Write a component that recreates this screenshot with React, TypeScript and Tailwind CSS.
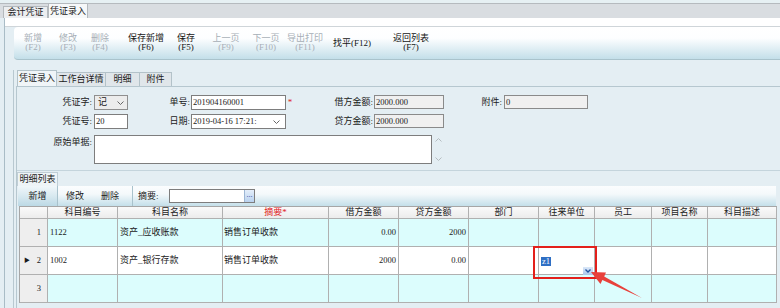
import React from "react";

const cols =
  "grid grid-cols-[28px_70px_105px_106px_70px_70px_70px_56px_57px_56px_69px]";

function Chevron({ cls }: { cls: string }) {
  return (
    <svg className={cls} width="7" height="4" viewBox="0 0 7 4">
      <path d="M0.5 0.5 L3.5 3.5 L6.5 0.5" fill="none" stroke="#666" strokeWidth="1" />
    </svg>
  );
}

const tb = [
  { a: "新增", b: "(F2)", d: true, c: "w-[32px] ml-[3px]" },
  { a: "修改", b: "(F3)", d: true, c: "w-[32px] ml-[3px]" },
  { a: "删除", b: "(F4)", d: true, c: "w-[32px]" },
  { a: "保存新增", b: "(F6)", d: false, c: "w-[40px] ml-[10px]" },
  { a: "保存", b: "(F5)", d: false, c: "w-[32px] ml-[4px]" },
  { a: "上一页", b: "(F9)", d: true, c: "w-[32px] ml-[8px]" },
  { a: "下一页", b: "(F10)", d: true, c: "w-[32px] ml-[8px]" },
  { a: "导出打印", b: "(F11)", d: true, c: "w-[40px] ml-[3px]" },
  { a: "找平(F12)", b: "", d: false, c: "w-[44px] ml-[5px]" },
  { a: "返回列表", b: "(F7)", d: false, c: "w-[40px] ml-[17px]" },
];

const headers = ["", "科目编号", "科目名称", "摘要*", "借方金额", "贷方金额", "部门", "往来单位", "员工", "项目名称", "科目描述"];

const rows = [
  { n: "1", code: "1122", name: "资产_应收账款", memo: "销售订单收款", dr: "0.00", cr: "2000", bg: "bg-[#dcfdfd]", cur: false },
  { n: "2", code: "1002", name: "资产_银行存款", memo: "销售订单收款", dr: "2000", cr: "0.00", bg: "bg-white", cur: true },
  { n: "3", code: "", name: "", memo: "", dr: "", cr: "", bg: "bg-[#dcfdfd]", cur: false },
];

export default function App() {
  return (
    <div className="relative w-[780px] h-[308px] overflow-hidden bg-[#e4eef3] text-[9px] leading-[9px] text-[#1a1a1a] font-['Liberation_Serif','Noto_Sans_CJK_SC',serif]">
      {/* top tab strip */}
      <div className="h-[18px] flex items-end pl-[3px] bg-[linear-gradient(to_bottom,#e6f0f3_0,#e6f0f3_3px,#b5babe_3px,#b5babe_4px,#d9dde1_4px)]">
        <div className="w-[45px] h-[12px] border border-b-0 border-[#b4b9bd] bg-[#eceef0] flex items-center justify-center">
          会计凭证
        </div>
        <div className="w-[40px] h-[15px] border border-b-0 border-[#b4b9bd] bg-[#f6f8f9] flex items-center justify-center">
          凭证录入
        </div>
      </div>

      <div className="ml-[4px] h-[290px] border-l border-[#a9bcc6] flex flex-col">
        <div className="h-[9px] bg-white border-b border-[#cfd5d9]"></div>
        {/* main toolbar */}
        <div className="ml-[9px] h-[33px] rounded-l-[4px] border-b border-[#a9c3cc] bg-[linear-gradient(to_bottom,#ffffff_0%,#fdfeff_35%,#c3dfe9_100%)] flex items-center">
          {tb.map((t, i) => (
            <div
              key={i}
              className={`${t.c} flex flex-col items-center whitespace-nowrap ${t.d ? "text-[#a6aeb6]" : "text-[#151515]"}`}
            >
              <div>{t.a}</div>
              {t.b && <div className="mt-[0px]">{t.b}</div>}
            </div>
          ))}
        </div>
        <div className="h-[10px]"></div>

        {/* inner frame */}
        <div className="ml-[8px] flex-1 border-l border-[#b8c8d0] pl-[2px] flex flex-col">
          {/* second tab row */}
          <div className="h-[16px] pl-[1px] flex items-end">
            <div className="w-[40px] h-[16px] border border-b-0 border-[#b3c2c9] bg-[#f0f5f8] flex items-center justify-center">
              凭证录入
            </div>
            <div className="w-[49px] h-[14px] border border-b-0 border-l-0 border-[#b3c2c9] bg-[#e0e6ea] flex items-center justify-center">
              工作台详情
            </div>
            <div className="w-[34px] h-[14px] border border-b-0 border-l-0 border-[#b3c2c9] bg-[#e0e6ea] flex items-center justify-center">
              明细
            </div>
            <div className="w-[32px] h-[14px] border border-b-0 border-l-0 border-[#b3c2c9] bg-[#e0e6ea] flex items-center justify-center">
              附件
            </div>
          </div>

          <div className="flex-1 border-l border-t border-[#b6c7cf] flex flex-col">
            {/* form panel */}
            <div className="h-[83px] pt-[8px]">
              {/* row 1 */}
              <div className="h-[15px] flex items-start">
                <div className="w-[75px] text-right leading-[15px]">凭证字:</div>
                <div className="ml-[2px] w-[34px] h-[15px] border border-[#8f8f8f] bg-[#ececec] flex items-center justify-between pl-[3px] pr-[3px]">
                  <span>记</span>
                  <Chevron cls="" />
                </div>
                <div className="w-[62px] text-right leading-[15px]">单号:</div>
                <div className="ml-[1px] w-[95px] h-[15px] border border-[#7d7d7d] bg-white pl-[1px] pt-[2px] text-[8.5px]">
                  201904160001
                </div>
                <div className="w-[8px] text-center text-[#e0201c] leading-[15px]">*</div>
                <div className="w-[79px] text-right leading-[15px]">借方金额:</div>
                <div className="ml-[1px] w-[70px] h-[14px] border border-[#8a8a8a] bg-[#f0f0f0] pl-[1px] pt-[2px] text-[8.5px]">
                  2000.000
                </div>
                <div className="w-[58px] text-right leading-[15px]">附件:</div>
                <div className="ml-[2px] w-[84px] h-[14px] border border-[#8a8a8a] bg-[#f0f0f0] pl-[1px] pt-[2px] text-[8.5px]">
                  0
                </div>
              </div>
              {/* row 2 */}
              <div className="mt-[4px] h-[15px] flex items-start">
                <div className="w-[75px] text-right leading-[15px]">凭证号:</div>
                <div className="ml-[2px] w-[34px] h-[15px] border border-[#7d7d7d] bg-white pl-[1px] pt-[2px] text-[8.5px]">
                  20
                </div>
                <div className="w-[62px] text-right leading-[15px]">日期:</div>
                <div className="ml-[1px] w-[95px] h-[15px] border border-[#7d7d7d] bg-white pl-[1px] flex items-center justify-between pr-[5px] text-[8.5px]">
                  <span>2019-04-16 17:21:</span>
                  <Chevron cls="" />
                </div>
                <div className="w-[8px]"></div>
                <div className="w-[79px] text-right leading-[15px]">贷方金额:</div>
                <div className="ml-[1px] w-[70px] h-[14px] border border-[#8a8a8a] bg-[#f0f0f0] pl-[1px] pt-[2px] text-[8.5px]">
                  2000.000
                </div>
              </div>
              {/* row 3 */}
              <div className="mt-[6px] h-[29px] flex items-start">
                <div className="w-[75px] text-right pt-[3px]">原始单据:</div>
                <div className="ml-[2px] w-[338px] h-[29px] border border-[#7d7d7d] bg-white"></div>
                <div className="w-[12px] h-[29px] flex flex-col items-center justify-between py-[3px]">
                  <svg width="7" height="4" viewBox="0 0 7 4">
                    <path d="M0.5 3.5 L3.5 0.5 L6.5 3.5" fill="none" stroke="#b5bcc0" strokeWidth="1" />
                  </svg>
                  <svg width="7" height="4" viewBox="0 0 7 4">
                    <path d="M0.5 0.5 L3.5 3.5 L6.5 0.5" fill="none" stroke="#b5bcc0" strokeWidth="1" />
                  </svg>
                </div>
              </div>
            </div>

            {/* details */}
            <div className="flex-1 border-t border-[#c4d4dc] flex flex-col">
              <div className="h-[15px] pt-[1px] flex">
                <div className="w-[41px] h-[14px] border border-b-0 border-[#c0ced5] bg-[#eef4f7] flex items-center justify-center">
                  明细列表
                </div>
              </div>
              {/* details toolbar */}
              <div className="ml-[1px] w-[758px] h-[20px] bg-[linear-gradient(to_bottom,#fbfdfe_0%,#f4f9fb_40%,#c4dfe9_100%)] flex items-center">
                <div className="w-[40px] h-[20px] border-r border-[#a9c2cc] flex items-center justify-center bg-[linear-gradient(to_bottom,#f1f7fa_0%,#d8e9f0_50%,#bcd9e5_100%)]">
                  新增
                </div>
                <div className="w-[34px] text-center">修改</div>
                <div className="w-[36px] text-center">删除</div>
                <div className="w-[5px] h-[20px] border-r border-[#a9c2cc]"></div>
                <div className="ml-[5px] w-[31px]">摘要:</div>
                <div className="w-[86px] h-[14px] border border-[#7d7d7d] bg-white flex justify-end">
                  <div className="w-[10px] h-[12px] bg-[linear-gradient(to_bottom,#e4eefa,#b9d2ef)] border-l border-[#9db6d4] text-[#1f3f8f] text-[8px] leading-[10px] text-center">
                    ...
                  </div>
                </div>
              </div>
              {/* grid */}
              <div className="ml-[2px] w-[758px] border-l border-t border-[#a6a6a6]">
                <div className={`${cols} h-[12px]`}>
                  {headers.map((h, i) => (
                    <div
                      key={i}
                      className={`border-r border-b border-[#b0b0b0] bg-[linear-gradient(to_bottom,#fafafa,#ececec)] flex items-center justify-center ${
                        i === 3 ? "text-[#e0201c]" : "text-[#222]"
                      }`}
                    >
                      {h}
                    </div>
                  ))}
                </div>
                {rows.map((r, i) => (
                  <div key={i} className={`${cols} h-[28px]`}>
                    <div className="border-r border-b border-[#b0b0b0] bg-[#eeeeee] flex items-center justify-between pl-[4px] pr-[6px] text-[8.5px]">
                      <span className="text-[6px]">{r.cur ? "▶" : ""}</span>
                      <span>{r.n}</span>
                    </div>
                    <div className={`${r.bg} border-r border-b border-[#b0b0b0] flex items-center pl-[2px] text-[8.5px]`}>{r.code}</div>
                    <div className={`${r.bg} border-r border-b border-[#b0b0b0] flex items-center pl-[2px]`}>{r.name}</div>
                    <div className={`${r.bg} border-r border-b border-[#b0b0b0] flex items-center pl-[1px]`}>{r.memo}</div>
                    <div className={`${r.bg} border-r border-b border-[#b0b0b0] flex items-center justify-end pr-[2px] text-[8.5px]`}>{r.dr}</div>
                    <div className={`${r.bg} border-r border-b border-[#b0b0b0] flex items-center justify-end pr-[2px] text-[8.5px]`}>{r.cr}</div>
                    <div className={`${r.bg} border-r border-b border-[#b0b0b0]`}></div>
                    <div className={`${r.bg} border-r border-b border-[#b0b0b0] flex items-center pl-[2px]`}>
                      {r.cur && (
                        <span className="bg-[#2f6fc4] text-white text-[8.5px] leading-[9px] px-[1px] mt-[2px]">z1</span>
                      )}
                    </div>
                    <div className={`${r.bg} border-r border-b border-[#b0b0b0]`}></div>
                    <div className={`${r.bg} border-r border-b border-[#b0b0b0]`}></div>
                    <div className={`${r.bg} border-r border-b border-[#b0b0b0]`}></div>
                  </div>
                ))}
              </div>
            </div>
          </div>
        </div>
      </div>

      {/* overlay: combo drop button */}
      <div className="absolute left-[583px] top-[267px] w-[10px] h-[8px] bg-[linear-gradient(to_bottom,#dbe8f8,#aac6ea)] flex items-center justify-center">
        <svg width="6" height="4" viewBox="0 0 6 4">
          <path d="M0.5 0.5 L3 3 L5.5 0.5" fill="none" stroke="#1f4f9f" strokeWidth="1.3" />
        </svg>
      </div>
      {/* overlay: red highlight */}
      <div className="absolute left-[533px] top-[246px] w-[64px] h-[33px] border-2 border-[#e3201b]"></div>
      {/* overlay: arrow */}
      <svg className="absolute left-0 top-0 pointer-events-none" width="780" height="308" viewBox="0 0 780 308">
        <polygon
          points="591,272 606,272.5 604.2,276.4 642,298 602.4,280 600.5,284"
          fill="#e8413b"
        />
      </svg>
    </div>
  );
}
